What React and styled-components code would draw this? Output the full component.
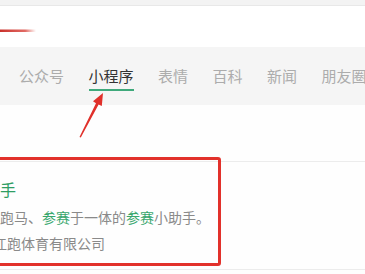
import React from 'react';
import styled, { createGlobalStyle } from 'styled-components';

const GlobalStyle = createGlobalStyle`
  html, body {
    margin: 0;
    padding: 0;
    overflow: hidden;
    background: #ffffff;
  }
  body {
    font-family: "Noto Sans CJK SC", "Noto Sans", sans-serif;
  }
`;

const Page = styled.div`
  position: relative;
  width: 365px;
  height: 274px;
  overflow: hidden;
  background: #fefefe;
`;

const TopStrip = styled.div`
  height: 5px;
  background: #f3f3f3;
  border-bottom: 1px solid #e8e8e8;
`;

const SearchArea = styled.div`
  height: 41px;
  background: #ffffff;
`;

const TabBar = styled.div`
  display: flex;
  gap: 24.5px;
  height: 58px;
  padding-left: 19px;
  background: #f5f5f5;
`;

const Tab = styled.div`
  padding-top: 20px;
  font-size: 15px;
  line-height: 17px;
  white-space: nowrap;
  color: ${p => (p.$active ? '#333333' : '#acacac')};

  &::after {
    content: '';
    display: block;
    height: 2px;
    margin-top: 5px;
    background: ${p => (p.$active ? '#3fa97b' : 'transparent')};
  }
`;

const Spacer = styled.div`
  height: 56px;
`;

const ResultItem = styled.div`
  border-top: 1px solid #ececec;
  border-bottom: 1px solid #ececec;
  height: 109px;
  padding-top: 15px;
  box-sizing: border-box;
`;

const Title = styled.div`
  font-size: 16px;
  line-height: 24px;
  color: #2f9d63;
`;

const Desc = styled.div`
  font-size: 14px;
  line-height: 26px;
  color: #8a8a8a;
  white-space: nowrap;
  margin-left: ${p => p.$shift || 0}px;
  margin-top: ${p => p.$top || 0}px;
`;

const Em = styled.span`
  color: #37a66c;
`;

const Overlay = styled.svg`
  position: absolute;
  left: 0;
  top: 0;
  pointer-events: none;
`;

const RedBox = styled.div`
  position: absolute;
  left: -6px;
  top: 157px;
  width: 221px;
  height: 103px;
  border: 3px solid #e2312b;
  border-radius: 3px;
`;

const tabs = ['公众号', '小程序', '表情', '百科', '新闻', '朋友圈'];

export default function App() {
  return (
    <>
      <GlobalStyle />
      <Page>
        <TopStrip />
        <SearchArea />
        <TabBar>
          {tabs.map(t => (
            <Tab key={t} $active={t === '小程序'}>{t}</Tab>
          ))}
        </TabBar>
        <Spacer />
        <ResultItem>
          <Title>手</Title>
          <Desc $top={3}>
            跑马、<Em>参赛</Em>于一体的<Em>参赛</Em>小助手。
          </Desc>
          <Desc $shift={-7}>江跑体育有限公司</Desc>
        </ResultItem>
        <RedBox />
        <Overlay width="365" height="274" viewBox="0 0 365 274">
          <defs>
            <linearGradient id="fade" x1="0" x2="1" y1="0" y2="0">
              <stop offset="0" stopColor="#c9302a" />
              <stop offset="0.7" stopColor="#d9453d" stopOpacity="0.8" />
              <stop offset="1" stopColor="#e05a50" stopOpacity="0" />
            </linearGradient>
          </defs>
          <rect x="0" y="29.5" width="36" height="2.5" fill="url(#fade)" />
          <polygon
            points="79.5,137 80.8,137.4 98.6,104.6 101.8,105.9 103,93 93,101.3 96,103.2"
            fill="#e0302a"
          />
        </Overlay>
      </Page>
    </>
  );
}
